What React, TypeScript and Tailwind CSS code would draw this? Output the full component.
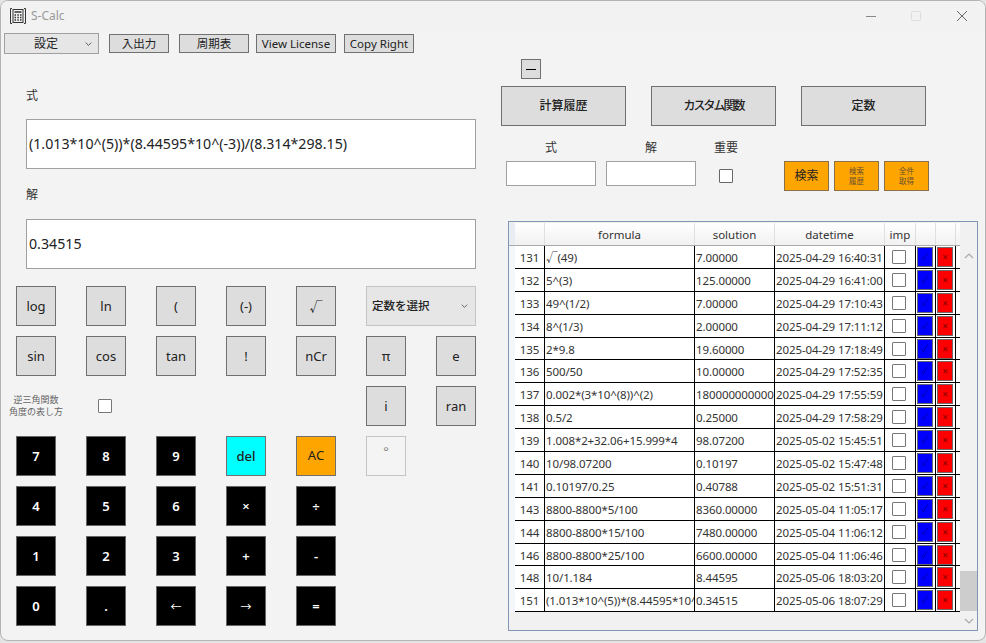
import React from "react";

const FONT = "[font-family:'Noto_Sans','Noto_Sans_CJK_JP',sans-serif]";

const rows: [string, string, string, string][] = [
  ["131", "√(49)", "7.00000", "2025-04-29 16:40:31"],
  ["132", "5^(3)", "125.00000", "2025-04-29 16:41:00"],
  ["133", "49^(1/2)", "7.00000", "2025-04-29 17:10:43"],
  ["134", "8^(1/3)", "2.00000", "2025-04-29 17:11:12"],
  ["135", "2*9.8", "19.60000", "2025-04-29 17:18:49"],
  ["136", "500/50", "10.00000", "2025-04-29 17:52:35"],
  ["137", "0.002*(3*10^(8))^(2)", "180000000000", "2025-04-29 17:55:59"],
  ["138", "0.5/2", "0.25000", "2025-04-29 17:58:29"],
  ["139", "1.008*2+32.06+15.999*4", "98.07200", "2025-05-02 15:45:51"],
  ["140", "10/98.07200", "0.10197", "2025-05-02 15:47:48"],
  ["141", "0.10197/0.25", "0.40788", "2025-05-02 15:51:31"],
  ["143", "8800-8800*5/100", "8360.00000", "2025-05-04 11:05:17"],
  ["144", "8800-8800*15/100", "7480.00000", "2025-05-04 11:06:12"],
  ["146", "8800-8800*25/100", "6600.00000", "2025-05-04 11:06:46"],
  ["148", "10/1.184", "8.44595", "2025-05-06 18:03:20"],
  ["151", "(1.013*10^(5))*(8.44595*10^(-3))/(8.314*298.15)", "0.34515", "2025-05-06 18:07:29"],
];

function Gray({ children }: { children: React.ReactNode }) {
  return (
    <button className="w-10 h-10 flex items-center justify-center pt-[1px] bg-[#dddddd] border border-[#707070] text-[13px] text-[#222]">
      {children}
    </button>
  );
}

function Dark({ children }: { children: React.ReactNode }) {
  return (
    <button className="w-10 h-10 flex items-center justify-center pt-[2px] bg-black border border-[#666] text-[13px] font-semibold text-white">
      {children}
    </button>
  );
}

function Tool({ w, children }: { w: string; children: React.ReactNode }) {
  return (
    <button className={`${w} h-[19px] flex items-center justify-center bg-[#dddddd] border border-[#707070] text-[11.5px] text-[#222]`}>
      {children}
    </button>
  );
}

function Check({ className = "" }: { className?: string }) {
  return <div className={`w-[14px] h-[14px] bg-white border border-[#666] rounded-[1px] ${className}`} />;
}

function Chevron({ up = false, className = "" }: { up?: boolean; className?: string }) {
  return (
    <svg width="10" height="6" viewBox="0 0 10 6" fill="none" className={className}>
      <path d={up ? "M1 5 L5 1 L9 5" : "M1 1 L5 5 L9 1"} stroke="currentColor" strokeWidth="1.2" />
    </svg>
  );
}

function HeaderCell({ w, children }: { w: string; children?: React.ReactNode }) {
  return (
    <div className={`${w} h-full shrink-0 flex items-center justify-center pt-[2px] border-r border-[#e0e0e0] text-[11.5px] text-[#333]`}>
      {children}
    </div>
  );
}

function Row({ r }: { r: [string, string, string, string] }) {
  return (
    <div className="flex h-[22.9px] bg-[#f3f6fa]">
      <div className="w-[6px] shrink-0" />
      <div className="flex flex-1 min-w-0 bg-white border-b border-black text-[11.5px] tracking-[-0.1px] text-[#333] leading-[24px]">
        <div className="w-[30px] shrink-0 border-r border-black text-center">{r[0]}</div>
        <div className="w-[150px] shrink-0 border-r border-black pl-[1px] overflow-hidden whitespace-nowrap">{r[1]}</div>
        <div className="w-[80px] shrink-0 border-r border-black pl-[1px] overflow-hidden whitespace-nowrap">{r[2]}</div>
        <div className="w-[110px] shrink-0 border-r border-black pl-[1px] overflow-hidden whitespace-nowrap">{r[3]}</div>
        <div className="w-[31px] shrink-0 border-r border-black flex justify-center pt-[4px] pr-[2px]">
          <Check className="border-[#777]" />
        </div>
        <div className="w-[20px] shrink-0 border-r border-black flex justify-start pl-[1px] pt-[1px]">
          <div className="w-[16px] h-[20px] bg-[#0000ff] border border-[#667] flex items-center justify-center text-[9px] text-[#0000a0]">✓</div>
        </div>
        <div className="w-[20px] shrink-0 border-r border-black flex justify-start pl-[1px] pt-[1px]">
          <div className="w-[16px] h-[20px] bg-[#ff0000] border border-[#766] flex items-center justify-center text-[10px] text-[#800000]">×</div>
        </div>
      </div>
    </div>
  );
}

export default function App() {
  return (
    <div className={`w-[986px] h-[643px] overflow-hidden bg-[#e4e4e4] ${FONT}`}>
      <div className="w-[986px] h-[641px] bg-[#f3f3f3] border border-[#b4b4b4] rounded-t-lg rounded-b-lg overflow-hidden flex flex-col">
        {/* title bar */}
        <div className="h-[32px] shrink-0 flex items-center bg-[#f2f2f2]">
          <svg width="18" height="18" viewBox="0 0 18 18" fill="none" className="ml-[8px] mt-[-2px] text-[#333]" stroke="currentColor">
            <path d="M3 1.5 H1.5 V16.5 H3 M15 1.5 H16.5 V16.5 H15" strokeWidth="1" />
            <rect x="4" y="2.5" width="10" height="13" strokeWidth="1" />
            <path d="M5.5 5 H12.5" strokeWidth="1.4" />
            <path d="M5.5 8 H7 M8.3 8 H9.8 M11 8 H12.5 M5.5 10.5 H7 M8.3 10.5 H9.8 M11 10.5 H12.5 M5.5 13 H7 M8.3 13 H9.8 M11 13 H12.5" strokeWidth="1.3" />
          </svg>
          <span className="ml-[4px] mt-[-2px] text-[12px] text-[#999]">S-Calc</span>
          <div className="flex-1" />
          <svg width="12" height="12" viewBox="0 0 12 12" className="mr-[33px] mt-[-2px] text-[#888]" stroke="currentColor" fill="none">
            <path d="M1 6.5 H11" />
          </svg>
          <svg width="12" height="12" viewBox="0 0 12 12" className="mr-[34px] mt-[-2px] text-[#ddd]" stroke="currentColor" fill="none">
            <rect x="1.5" y="1.5" width="9" height="9" rx="1" />
          </svg>
          <svg width="12" height="12" viewBox="0 0 12 12" className="mr-[17px] mt-[-2px] text-[#666]" stroke="currentColor" fill="none">
            <path d="M1 1 L11 11 M11 1 L1 11" />
          </svg>
        </div>

        {/* toolbar */}
        <div className="h-[21px] shrink-0 flex items-center pl-[3px]">
          <div className="w-[95px] h-[21px] flex items-center bg-[#e6e6e6] border border-[#a0a0a0] text-[12px] text-[#222]">
            <span className="w-[80px] text-center pl-[2px]">設定</span>
            <Chevron className="w-[7px] text-[#444]" />
          </div>
          <div className="ml-[10px]"><Tool w="w-[60px]">入出力</Tool></div>
          <div className="ml-[10px]"><Tool w="w-[70px]">周期表</Tool></div>
          <div className="ml-[7px]"><Tool w="w-[80px]">View License</Tool></div>
          <div className="ml-[8px]"><Tool w="w-[70px]">Copy Right</Tool></div>
        </div>

        {/* body */}
        <div className="flex flex-1 min-h-0">
          {/* left */}
          <div className="w-[500px] shrink-0">
            <div className="ml-[25px] mt-[30px] h-[20px] flex items-center pt-[3px] text-[12px] text-[#333]">式</div>
            <div className="ml-[25px] mt-[15px] w-[450px] h-[50px] bg-white border border-[#a0a0a0] flex items-center pl-[2px] text-[14.2px] text-[#222] whitespace-nowrap">
              (1.013*10^(5))*(8.44595*10^(-3))/(8.314*298.15)
            </div>
            <div className="ml-[25px] mt-[15px] h-[20px] flex items-center pt-[2px] text-[12px] text-[#333]">解</div>
            <div className="ml-[25px] mt-[15px] w-[450px] h-[50px] bg-white border border-[#a0a0a0] flex items-center pl-[2px] text-[14.2px] text-[#222]">
              0.34515
            </div>

            <div className="ml-[15px] mt-[17px] grid grid-cols-[repeat(7,40px)] auto-rows-[40px] gap-x-[30px] gap-y-[10px]">
              <Gray>log</Gray>
              <Gray>ln</Gray>
              <Gray>(</Gray>
              <Gray>(-)</Gray>
              <Gray>√</Gray>
              <div className="col-span-2 h-10 flex items-center justify-between pl-[5px] pr-[7px] bg-[#e6e6e6] border border-[#c4c4c4] text-[11.5px] font-medium text-[#222]">
                定数を選択
                <Chevron className="w-[7px] text-[#555]" />
              </div>

              <Gray>sin</Gray>
              <Gray>cos</Gray>
              <Gray>tan</Gray>
              <Gray>!</Gray>
              <Gray>nCr</Gray>
              <Gray>π</Gray>
              <Gray>e</Gray>

              <div className="flex flex-col items-center justify-center -mx-2 text-[9px] leading-[12px] text-[#666] whitespace-nowrap">
                <span>逆三角関数</span>
                <span>角度の表し方</span>
              </div>
              <div className="flex items-center justify-center pr-[2px]"><Check className="border-[#777]" /></div>
              <div />
              <div />
              <div />
              <Gray>i</Gray>
              <Gray>ran</Gray>

              <Dark>7</Dark>
              <Dark>8</Dark>
              <Dark>9</Dark>
              <button className="w-10 h-10 flex items-center justify-center pt-[1px] bg-[#00ffff] border border-[#707070] text-[13px] font-medium text-[#222]">del</button>
              <button className="w-10 h-10 flex items-center justify-center bg-[#ffa500] border border-[#707070] text-[13px] text-[#222]">AC</button>
              <button className="w-10 h-10 flex items-start justify-center pt-[5px] bg-[#f4f4f4] border border-[#c4c4c4] text-[13px] text-[#888]">°</button>
              <div />

              <Dark>4</Dark>
              <Dark>5</Dark>
              <Dark>6</Dark>
              <Dark>×</Dark>
              <Dark>÷</Dark>
              <div />
              <div />

              <Dark>1</Dark>
              <Dark>2</Dark>
              <Dark>3</Dark>
              <Dark>+</Dark>
              <Dark>-</Dark>
              <div />
              <div />

              <Dark>0</Dark>
              <Dark>.</Dark>
              <Dark><span className="text-[11px] font-normal">←</span></Dark>
              <Dark><span className="text-[11px] font-normal">→</span></Dark>
              <Dark>=</Dark>
            </div>
          </div>

          {/* right */}
          <div className="flex-1 min-w-0">
            <div className="ml-[20px] mt-[5px] w-[20px] h-[20px] flex items-center justify-center bg-[#dddddd] border border-[#707070]">
              <div className="w-[10px] h-[1px] bg-black" />
            </div>
            <div className="mt-[7px] flex gap-[25px]">
              <button className="w-[125px] h-10 flex items-center justify-center bg-[#dddddd] border border-[#707070] text-[12px] font-medium text-[#222]">計算履歴</button>
              <button className="w-[125px] h-10 flex items-center justify-center bg-[#dddddd] border border-[#707070] text-[12px] font-medium tracking-[-2px] text-[#222]">カスタム関数</button>
              <button className="w-[125px] h-10 flex items-center justify-center bg-[#dddddd] border border-[#707070] text-[12px] font-medium text-[#222]">定数</button>
            </div>

            <div className="mt-[12px] ml-[5px] flex items-start">
              <div className="w-[90px] flex flex-col items-center">
                <div className="h-[20px] flex items-center text-[12px] text-[#333]">式</div>
                <div className="mt-[3px] w-[90px] h-[25px] bg-white border border-[#a0a0a0]" />
              </div>
              <div className="ml-[10px] w-[90px] flex flex-col items-center">
                <div className="h-[20px] flex items-center text-[12px] text-[#333]">解</div>
                <div className="mt-[3px] w-[90px] h-[25px] bg-white border border-[#a0a0a0]" />
              </div>
              <div className="ml-[10px] w-[40px] flex flex-col items-center">
                <div className="h-[20px] flex items-center text-[12px] text-[#333]">重要</div>
                <Check className="mt-[11px]" />
              </div>
              <div className="ml-[38px] mt-[23px] flex gap-[5px]">
                <button className="w-[45px] h-[30px] flex items-center justify-center bg-[#ffa500] border border-[#8a7048] text-[12px] text-[#222]">検索</button>
                <button className="w-[45px] h-[30px] flex flex-col items-center justify-center bg-[#ffa500] border border-[#8a7048] text-[7.5px] leading-[10px] text-[#6a5030]">
                  <span>検索</span>
                  <span>履歴</span>
                </button>
                <button className="w-[45px] h-[30px] flex flex-col items-center justify-center bg-[#ffa500] border border-[#8a7048] text-[7.5px] leading-[10px] text-[#6a5030]">
                  <span>全件</span>
                  <span>取得</span>
                </button>
              </div>
            </div>

            {/* table */}
            <div className="mt-[30px] ml-[7px] w-[470px] h-[410px] border border-[#8094b4] bg-[#f1f1f1] flex pt-[1px]">
              <div className="w-[451px] shrink-0 flex flex-col">
                <div className="h-[23px] shrink-0 flex bg-gradient-to-b from-white to-[#f1f1f1] border-b border-[#aaa]">
                  <div className="w-[6px] shrink-0 bg-[#e8edf4]" />
                  <HeaderCell w="w-[30px]" />
                  <HeaderCell w="w-[150px]">formula</HeaderCell>
                  <HeaderCell w="w-[80px]">solution</HeaderCell>
                  <HeaderCell w="w-[110px]">datetime</HeaderCell>
                  <HeaderCell w="w-[31px]">imp</HeaderCell>
                  <HeaderCell w="w-[20px]" />
                  <HeaderCell w="w-[20px]" />
                </div>
                {rows.map((r) => (
                  <Row key={r[0]} r={r} />
                ))}
              </div>
              <div className="w-[17px] shrink-0 flex flex-col items-center text-[#aaa]">
                <Chevron up className="mt-[30px]" />
                <div className="flex-1" />
                <div className="w-[17px] h-[40px] bg-[#cdcdcd]" />
                <Chevron className="mt-[7px] mb-[6px]" />
              </div>
            </div>
          </div>
        </div>
      </div>
    </div>
  );
}
